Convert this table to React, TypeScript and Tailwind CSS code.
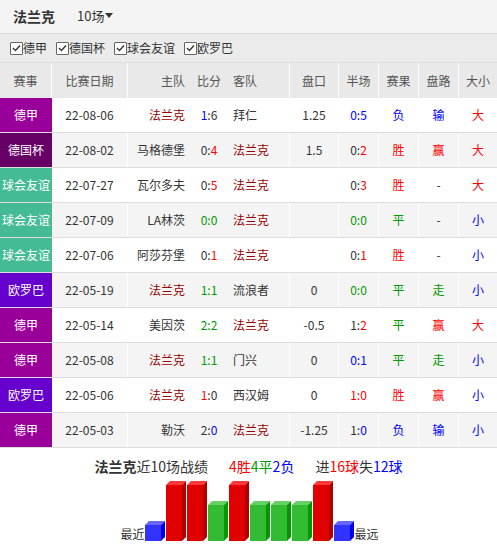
import React from 'react';

const R = '#ff0000';
const B = '#0000ff';
const G = '#009900';

type Score = { t: string; l?: string; r?: string; all?: string };

interface Row {
  c: string;
  cc: string;
  d: string;
  h: string;
  s: Score;
  a: string;
  pk: string;
  hs: Score;
  res: string;
  pl: string;
  dx: string;
}

const BUND = '#990099';
const POKAL = '#660066';
const FRIEND = '#44bb94';
const EURO = '#6600cc';

const rows: Row[] = [
  { c: '德甲', cc: BUND, d: '22-08-06', h: '法兰克', s: { t: '1:6', l: B }, a: '拜仁', pk: '1.25', hs: { t: '0:5', all: B }, res: '负', pl: '输', dx: '大' },
  { c: '德国杯', cc: POKAL, d: '22-08-02', h: '马格德堡', s: { t: '0:4', r: R }, a: '法兰克', pk: '1.5', hs: { t: '0:2', r: R }, res: '胜', pl: '赢', dx: '大' },
  { c: '球会友谊', cc: FRIEND, d: '22-07-27', h: '瓦尔多夫', s: { t: '0:5', r: R }, a: '法兰克', pk: '', hs: { t: '0:3', r: R }, res: '胜', pl: '-', dx: '大' },
  { c: '球会友谊', cc: FRIEND, d: '22-07-09', h: 'LA林茨', s: { t: '0:0', all: G }, a: '法兰克', pk: '', hs: { t: '0:0', all: G }, res: '平', pl: '-', dx: '小' },
  { c: '球会友谊', cc: FRIEND, d: '22-07-06', h: '阿莎芬堡', s: { t: '0:1', r: R }, a: '法兰克', pk: '', hs: { t: '0:1', r: R }, res: '胜', pl: '-', dx: '小' },
  { c: '欧罗巴', cc: EURO, d: '22-05-19', h: '法兰克', s: { t: '1:1', all: G }, a: '流浪者', pk: '0', hs: { t: '0:0', all: G }, res: '平', pl: '走', dx: '小' },
  { c: '德甲', cc: BUND, d: '22-05-14', h: '美因茨', s: { t: '2:2', all: G }, a: '法兰克', pk: '-0.5', hs: { t: '1:2', r: R }, res: '平', pl: '赢', dx: '大' },
  { c: '德甲', cc: BUND, d: '22-05-08', h: '法兰克', s: { t: '1:1', all: G }, a: '门兴', pk: '0', hs: { t: '0:1', all: B }, res: '平', pl: '走', dx: '小' },
  { c: '欧罗巴', cc: EURO, d: '22-05-06', h: '法兰克', s: { t: '1:0', l: R }, a: '西汉姆', pk: '0', hs: { t: '1:0', all: R }, res: '胜', pl: '赢', dx: '小' },
  { c: '德甲', cc: BUND, d: '22-05-03', h: '勒沃', s: { t: '2:0', r: B }, a: '法兰克', pk: '-1.25', hs: { t: '1:0', r: B }, res: '负', pl: '输', dx: '小' },
];

const resColor: Record<string, string> = { 胜: R, 平: G, 负: B, 赢: R, 走: G, 输: B, 大: R, 小: B, '-': '#333' };

function ScoreText({ s }: { s: Score }) {
  if (s.all) return <span style={{ color: s.all }}>{s.t}</span>;
  const [l, r] = s.t.split(':');
  return (
    <span>
      <span style={s.l ? { color: s.l } : undefined}>{l}</span>:
      <span style={s.r ? { color: s.r } : undefined}>{r}</span>
    </span>
  );
}

function Team({ name }: { name: string }) {
  return <span className={name === '法兰克' ? 'text-[#990000]' : ''}>{name}</span>;
}

function Check({ label }: { label: string }) {
  return (
    <label className="flex items-center mr-[9px]">
      <span className="w-[13px] h-[13px] border border-[#666] bg-white flex items-center justify-center rounded-[1px]">
        <svg width="9" height="8" viewBox="0 0 9 8">
          <path d="M1 4 L3.5 6.5 L8 1.5" fill="none" stroke="#333" strokeWidth="1.4" />
        </svg>
      </span>
      <span>{label}</span>
    </label>
  );
}

const grid = 'grid grid-cols-[52px_76px_62px_38px_62px_49px_40px_40px_40px_38px]';

const results = ['b', 'r', 'r', 'g', 'r', 'g', 'g', 'g', 'r', 'b'];
const barStyle: Record<string, { h: number; front: string; top: string; side: string }> = {
  r: { h: 56, front: '#e00000', top: '#ff3838', side: '#b00000' },
  g: { h: 36, front: '#33bb33', top: '#66d066', side: '#009900' },
  b: { h: 16, front: '#3333ff', top: '#6666ff', side: '#0000ee' },
};

function Chart() {
  const base = 61;
  return (
    <svg width="210" height="62" viewBox="0 0 210 62">
      {results.map((k, i) => {
        const b = barStyle[k];
        const x = i * 21;
        const y = base - b.h;
        return (
          <g key={i}>
            <rect x={x} y={y} width={16} height={b.h} fill={b.front} />
            <polygon points={`${x},${y} ${x + 4},${y - 4} ${x + 20},${y - 4} ${x + 16},${y}`} fill={b.top} />
            <polygon points={`${x + 16},${y} ${x + 20},${y - 4} ${x + 20},${base - 4} ${x + 16},${base}`} fill={b.side} />
          </g>
        );
      })}
    </svg>
  );
}

export default function App() {
  return (
    <div className="w-[497px] h-[546px] bg-white text-[#333] font-['Noto_Sans_CJK_SC',sans-serif] text-[12px] overflow-hidden">
      <div className="h-[34px] bg-[#f4f4f4] border-b border-[#dddddd] flex items-center pl-[13px] pb-[2px]">
        <span className="font-bold text-[14px] leading-none">法兰克</span>
        <span className="ml-[22px] text-[13px] leading-none flex items-center">
          10场
          <svg width="8" height="5" viewBox="0 0 8 5" className="ml-[1px]">
            <path d="M0 0 H8 L4 5 Z" fill="#333" />
          </svg>
        </span>
      </div>
      <div className="h-[29px] bg-[#ebebeb] border-b border-[#dddddd] flex items-center pl-[10px] leading-none">
        <Check label="德甲" />
        <Check label="德国杯" />
        <Check label="球会友谊" />
        <Check label="欧罗巴" />
      </div>
      <div className={`${grid} h-[35px] bg-[#e9e9e9] text-[#555] items-stretch`}>
        <div className="flex items-center justify-center border-r border-white">赛事</div>
        <div className="flex items-center justify-center border-r border-white">比赛日期</div>
        <div className="flex items-center justify-end pr-[5px]">主队</div>
        <div className="flex items-center justify-center">比分</div>
        <div className="flex items-center pl-[5px] border-r border-white">客队</div>
        <div className="flex items-center justify-center border-r border-white">盘口</div>
        <div className="flex items-center justify-center border-r border-white">半场</div>
        <div className="flex items-center justify-center border-r border-white">赛果</div>
        <div className="flex items-center justify-center border-r border-white">盘路</div>
        <div className="flex items-center justify-center">大小</div>
      </div>
      {rows.map((r, i) => (
        <div
          key={i}
          className={`${grid} h-[35px] border-b border-[#dddddd] ${i % 2 === 1 ? 'bg-[#f4f4f4]' : 'bg-white'}`}
        >
          <div className="flex items-center justify-center text-white whitespace-nowrap" style={{ backgroundColor: r.cc }}>
            {r.c}
          </div>
          <div className="flex items-center justify-center border-r border-white">{r.d}</div>
          <div className="flex items-center justify-end pr-[5px] whitespace-nowrap">
            <Team name={r.h} />
          </div>
          <div className="flex items-center justify-center">
            <ScoreText s={r.s} />
          </div>
          <div className="flex items-center pl-[5px] border-r border-white whitespace-nowrap">
            <Team name={r.a} />
          </div>
          <div className="flex items-center justify-center border-r border-white">{r.pk}</div>
          <div className="flex items-center justify-center border-r border-white">
            <ScoreText s={r.hs} />
          </div>
          <div className="flex items-center justify-center border-r border-white" style={{ color: resColor[r.res] }}>
            {r.res}
          </div>
          <div className="flex items-center justify-center border-r border-white" style={{ color: resColor[r.pl] }}>
            {r.pl}
          </div>
          <div className="flex items-center justify-center" style={{ color: resColor[r.dx] }}>
            {r.dx}
          </div>
        </div>
      ))}
      <div className="flex justify-center items-center h-[32px] pt-[4px] text-[14px] leading-none">
        <span>
          <span className="font-bold">法兰克</span>近10场战绩
        </span>
        <span className="ml-[21px]">
          <span className="text-[#ff0000]">4胜</span>
          <span className="text-[#009900]">4平</span>
          <span className="text-[#0000ff]">2负</span>
        </span>
        <span className="ml-[21px]">
          进<span className="text-[#ff0000]">16球</span>失<span className="text-[#0000ff]">12球</span>
        </span>
      </div>
      <div className="flex justify-center items-end leading-none">
        <span className="text-[12px] mb-[2px] pl-[2px]">最近</span>
        <Chart />
        <span className="text-[12px] mb-[2px]">最远</span>
      </div>
    </div>
  );
}
